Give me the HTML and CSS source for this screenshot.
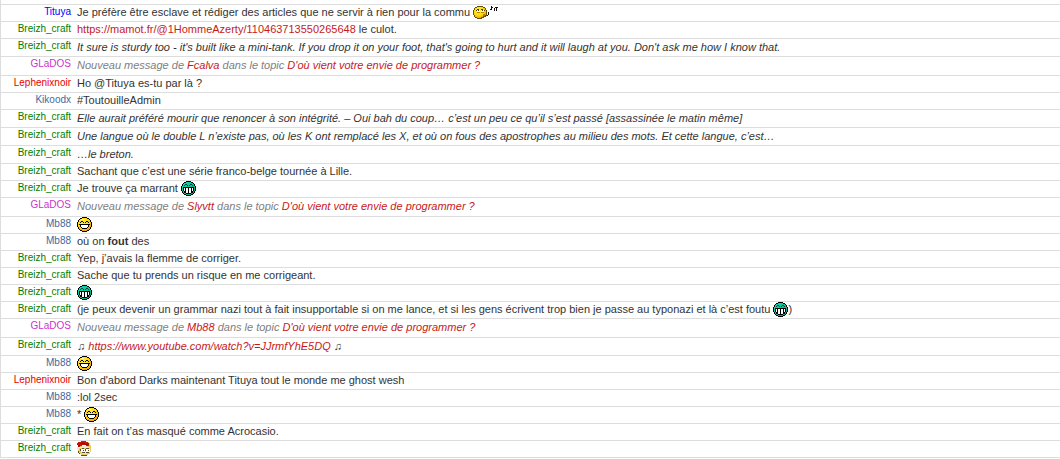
FILE: index.html
```html
<!DOCTYPE html>
<html lang="fr">
<head>
    <meta charset="UTF-8">
    <meta name="viewport" content="width=device-width, initial-scale=1.0">
    <title>Shoutbox</title>
    <link rel="stylesheet" href="styles.css">
</head>
<body>
    <!-- Smileys -->
    <svg class="sprites" aria-hidden="true">
        <defs>
            <linearGradient id="teal" x1="0" y1="0" x2="1" y2="1">
                <stop offset="0" stop-color="#0fe0b0"/>
                <stop offset="1" stop-color="#08a07c"/>
            </linearGradient>
            <radialGradient id="yellow" cx="0.4" cy="0.35" r="0.7">
                <stop offset="0" stop-color="#fff04a"/>
                <stop offset="0.6" stop-color="#ffd910"/>
                <stop offset="1" stop-color="#f09a00"/>
            </radialGradient>
        </defs>
        <symbol id="mrgreen" viewBox="0 0 15 15">
            <path fill="#000" d="M5 0h5v1h2v1h1v1h1v2h1v5h-1v2h-1v1h-1v1h-2v1H5v-1H3v-1H2v-1H1v-2H0V5h1V3h1V2h1V1h2z"/>
            <path fill="url(#teal)" d="M5 1h5v1h2v1h1v2h1v5h-1v2h-1v1h-2v1H5v-1H3v-1H2v-2H1V5h1V3h1V2h2z"/>
            <path fill="#044" d="M4 3h2v1H4zM3 4h1v1H3zM6 4h1v1H6zM9 3h2v1H9zM8 4h1v1H8zM11 4h1v1h-1z"/>
            <path fill="#000" d="M2 6h11v4h-1v2h-2v1H5v-1H3v-2H2z"/>
            <path fill="#fff" d="M3 7h1v3H3zM5 7h2v5H5zM8 7h2v5H8zM11 7h1v3h-1z"/>
        </symbol>
        <symbol id="grin" viewBox="0 0 15 15">
            <path fill="#000" d="M5 0h5v1h2v1h1v1h1v2h1v5h-1v2h-1v1h-1v1h-2v1H5v-1H3v-1H2v-1H1v-2H0V5h1V3h1V2h1V1h2z"/>
            <path fill="url(#yellow)" d="M5 1h5v1h2v1h1v2h1v5h-1v2h-1v1h-2v1H5v-1H3v-1H2v-2H1V5h1V3h1V2h2z"/>
            <path fill="#000" d="M4 4h2v1H4zM3 5h1v1H3zM6 5h1v1H6zM9 4h2v1H9zM8 5h1v1H8zM11 5h1v1h-1zM2 7h11v1h-1v2h-1v1h-1v1H5v-1H4v-1H3V8H2z"/>
            <path fill="#fff" d="M4 8h7v2H4zM5 10h5v1H5z"/>
            <path fill="#fffbc0" d="M4 2h3v1H4z"/>
        </symbol>
        <symbol id="whistle" viewBox="0 0 26 15">
            <path fill="#6b5000" d="M4 1h6v1h2v1h1v2h1v6h-1v1h-2v1H9v1H4v-1H2v-1H1v-2H0V5h1V3h1V2h2z"/>
            <path fill="url(#yellow)" d="M4 2h6v1h2v2h1v5h-1v1h-2v1H8v1H4v-1H2v-2H1V5h1V3h2z"/>
            <path fill="#fff" d="M4 5h3v2H4zM8 5h3v2H8z"/>
            <path fill="#4a3a10" d="M4 4h2v1H4zM8 4h2v1H8zM3 5h1v1H3zM5 5h1v1H5zM9 5h1v1H9zM11 5h1v1h-1z"/>
            <path fill="#c07a00" d="M4 7h3v1H4zM8 7h3v1H8zM10 9h2v2h-2z"/>
            <path fill="#111" d="M15 7h1v3h-1v1h-1v-1h1zM18 1h1v1h1v1h-1v2h-1zM17 4h1v1h-1zM22 2h3v1h-1v3h-1V3h-1v3h-1V3h1z"/>
        </symbol>
        <symbol id="santa" viewBox="0 0 15 15">
            <path fill="#e9cf58" d="M9 1h3v1h1v2h1v7h-1v2h-2v1H4v-1H2v-2H1V7h2V5h6z"/>
            <path fill="#f6e88b" d="M4 10h8v2h-2v1H5v-1H4z"/>
            <path fill="#c3150d" d="M1 1h3V0h5v1h2v1h1v3H9V4H5v1H3v1H1V4H0V2h1z"/>
            <path fill="#7e1009" d="M4 2h4v1H4zM8 3h3v1H8zM1 4h2v1H1z"/>
            <path fill="#f2e6dc" d="M0 6h2v3H0zM3 6h2V5h5v1h2v1H3z"/>
            <path fill="#fff" d="M4 8h4v3H4zM9 8h4v3H9z"/>
            <path fill="#5b4a35" d="M5 7h2v1H5zM9 7h3v1H9zM6 9h1v1H6zM11 9h1v1h-1zM3 8h1v2H3zM8 8h1v2H8zM5 11h3v1H5zM9 11h3v1H9zM1 10h1v2H1zM2 12h1v1H2zM4 14h6v1H4z"/>
        </symbol>
    </svg>

    <ul class="shoutbox">
        <li>
            <span class="author blue">Tituya</span>
            <p>Je préfère être esclave et rédiger des articles que ne servir à rien pour la commu <svg class="smiley wide" role="img" aria-label=":siffle:"><use href="#whistle"/></svg></p>
        </li>
        <li>
            <span class="author green">Breizh_craft</span>
            <p><a href="https://mamot.fr/@1HommeAzerty/110463713550265648">https://mamot.fr/@1HommeAzerty/110463713550265648</a> le culot.</p>
        </li>
        <li class="action">
            <span class="author green">Breizh_craft</span>
            <p>It sure is sturdy too - it's built like a mini-tank. If you drop it on your foot, that's going to hurt and it will laugh at you. Don't ask me how I know that.</p>
        </li>
        <li class="action bot">
            <span class="author purple">GLaDOS</span>
            <p>Nouveau message de <a href="#">Fcalva</a> dans le topic <a href="#">D'où vient votre envie de programmer ?</a></p>
        </li>
        <li>
            <span class="author red">Lephenixnoir</span>
            <p>Ho @Tituya es-tu par là ?</p>
        </li>
        <li>
            <span class="author steel">Kikoodx</span>
            <p>#ToutouilleAdmin</p>
        </li>
        <li class="action">
            <span class="author green">Breizh_craft</span>
            <p>Elle aurait préféré mourir que renoncer à son intégrité. – Oui bah du coup… c’est un peu ce qu’il s’est passé [assassinée le matin même]</p>
        </li>
        <li class="action">
            <span class="author green">Breizh_craft</span>
            <p>Une langue où le double L n’existe pas, où les K ont remplacé les X, et où on fous des apostrophes au milieu des mots. Et cette langue, c’est…</p>
        </li>
        <li class="action">
            <span class="author green">Breizh_craft</span>
            <p>…le breton.</p>
        </li>
        <li>
            <span class="author green">Breizh_craft</span>
            <p>Sachant que c’est une série franco-belge tournée à Lille.</p>
        </li>
        <li>
            <span class="author green">Breizh_craft</span>
            <p>Je trouve ça marrant <svg class="smiley" role="img" aria-label=":mrgreen:"><use href="#mrgreen"/></svg></p>
        </li>
        <li class="action bot">
            <span class="author purple">GLaDOS</span>
            <p>Nouveau message de <a href="#">Slyvtt</a> dans le topic <a href="#">D'où vient votre envie de programmer ?</a></p>
        </li>
        <li>
            <span class="author steel">Mb88</span>
            <p><svg class="smiley" role="img" aria-label=":D"><use href="#grin"/></svg></p>
        </li>
        <li>
            <span class="author steel">Mb88</span>
            <p>où on <strong>fout</strong> des</p>
        </li>
        <li>
            <span class="author green">Breizh_craft</span>
            <p>Yep, j’avais la flemme de corriger.</p>
        </li>
        <li>
            <span class="author green">Breizh_craft</span>
            <p>Sache que tu prends un risque en me corrigeant.</p>
        </li>
        <li>
            <span class="author green">Breizh_craft</span>
            <p><svg class="smiley" role="img" aria-label=":mrgreen:"><use href="#mrgreen"/></svg></p>
        </li>
        <li>
            <span class="author green">Breizh_craft</span>
            <p>(je peux devenir un grammar nazi tout à fait insupportable si on me lance, et si les gens écrivent trop bien je passe au typonazi et là c’est foutu <svg class="smiley" role="img" aria-label=":mrgreen:"><use href="#mrgreen"/></svg>)</p>
        </li>
        <li class="action bot">
            <span class="author purple">GLaDOS</span>
            <p>Nouveau message de <a href="#">Mb88</a> dans le topic <a href="#">D'où vient votre envie de programmer ?</a></p>
        </li>
        <li class="action">
            <span class="author green">Breizh_craft</span>
            <p>♫ <a href="https://www.youtube.com/watch?v=JJrmfYhE5DQ">https://www.youtube.com/watch?v=JJrmfYhE5DQ</a> ♫</p>
        </li>
        <li>
            <span class="author steel">Mb88</span>
            <p><svg class="smiley" role="img" aria-label=":D"><use href="#grin"/></svg></p>
        </li>
        <li>
            <span class="author red">Lephenixnoir</span>
            <p>Bon d'abord Darks maintenant Tituya tout le monde me ghost wesh</p>
        </li>
        <li>
            <span class="author steel">Mb88</span>
            <p>:lol 2sec</p>
        </li>
        <li>
            <span class="author steel">Mb88</span>
            <p>* <svg class="smiley" role="img" aria-label=":D"><use href="#grin"/></svg></p>
        </li>
        <li>
            <span class="author green">Breizh_craft</span>
            <p>En fait on t’as masqué comme Acrocasio.</p>
        </li>
        <li>
            <span class="author green">Breizh_craft</span>
            <p><svg class="smiley" role="img" aria-label=":noel:"><use href="#santa"/></svg></p>
        </li>
    </ul>
</body>
</html>
```
FILE: styles.css
```css
body {
    margin: 0;
    background: #fff;
    color: #333;
    font-family: "Liberation Sans", Arial, "DejaVu Sans", sans-serif;
    font-size: 11px;
}
.sprites {
    position: absolute;
    width: 0;
    height: 0;
}
.shoutbox {
    list-style: none;
    margin: 0;
    padding: 4px 0 0;
    border-left: 1px solid #ddd;
}
.shoutbox li {
    display: grid;
    grid-template-columns: 70px 1fr;
    column-gap: 6px;
    border-top: 1px solid #ddd;
}
.shoutbox li:last-child {
    border-bottom: 1px solid #ddd;
}
.shoutbox p {
    margin: 0;
    min-height: 16px;
    line-height: 14px;
}
.author {
    font-size: 10px;
    line-height: 13px;
    text-align: right;
}
.shoutbox .action p {
    min-height: 17px;
    line-height: 17px;
    font-style: italic;
}
.shoutbox .bot p {
    min-height: 18px;
    color: #808080;
}
a {
    color: #c61a1a;
    text-decoration: none;
}
a:hover {
    text-decoration: underline;
}
.blue {
    color: #0000ff;
}
.green {
    color: #008000;
}
.purple {
    color: #cc33cc;
}
.red {
    color: #e80000;
}
.steel {
    color: #4169a0;
}
.smiley {
    width: 15px;
    height: 15px;
    vertical-align: top;
    shape-rendering: crispEdges;
}
.wide {
    width: 26px;
}
```
